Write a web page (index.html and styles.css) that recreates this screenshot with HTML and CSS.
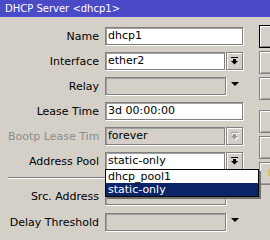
FILE: index.html
```html
<!DOCTYPE html>
<html>
<head>
    <title>DHCP Server</title>
    <link rel="stylesheet" href="styles.css">
</head>
<body>
    <div class="window">
        <div class="titlebar">DHCP Server &lt;dhcp1&gt;</div>
        <div class="content">
            <div class="form">
                <div class="row">
                    <label class="lbl">Name</label>
                    <div class="field wide">dhcp1</div>
                </div>
                <div class="row">
                    <label class="lbl">Interface</label>
                    <div class="field">ether2</div>
                    <span class="dd-btn">
                        <svg width="7" height="8" viewBox="0 0 7 8"><rect x="0" y="0" width="7" height="1"/><rect x="2" y="2" width="3" height="2"/><polygon points="0,4 7,4 3.5,7.5"/></svg>
                    </span>
                </div>
                <div class="row">
                    <label class="lbl">Relay</label>
                    <div class="field off plain"></div>
                    <span class="arrow"></span>
                </div>
                <div class="row">
                    <label class="lbl">Lease Time</label>
                    <div class="field wide">3d 00:00:00</div>
                </div>
                <div class="row">
                    <label class="lbl dim">Bootp Lease Time</label>
                    <div class="field off">forever</div>
                    <span class="dd-btn disabled">
                        <svg width="7" height="8" viewBox="0 0 7 8"><rect x="0" y="0" width="7" height="1"/><rect x="2" y="2" width="3" height="2"/><polygon points="0,4 7,4 3.5,7.5"/></svg>
                    </span>
                </div>
                <div class="row">
                    <label class="lbl">Address Pool</label>
                    <div class="field">static-only</div>
                    <span class="dd-btn">
                        <svg width="7" height="8" viewBox="0 0 7 8"><rect x="0" y="0" width="7" height="1"/><rect x="2" y="2" width="3" height="2"/><polygon points="0,4 7,4 3.5,7.5"/></svg>
                    </span>
                </div>
                <div class="sep"></div>
                <div class="row spaced">
                    <label class="lbl">Src. Address</label>
                    <div class="field off plain"></div>
                    <span class="arrow"></span>
                </div>
                <div class="row">
                    <label class="lbl">Delay Threshold</label>
                    <div class="field off plain"></div>
                    <span class="arrow"></span>
                </div>

                <!-- lista abierta de Address Pool -->
                <ul class="popup">
                    <li>dhcp_pool1</li>
                    <li class="sel">static-only</li>
                </ul>
            </div>
            <div class="buttons">
                <span class="btn default"></span>
                <span class="btn"></span>
                <span class="btn"></span>
                <span class="btn group"></span>
                <span class="btn"></span>
                <span class="btn"><span class="mark"></span></span>
            </div>
        </div>
    </div>
</body>
</html>
```

FILE: styles.css
```css
/* Ventana */
body {
    margin: 0;
    background-color: #d4d0c8;
    font-family: "DejaVu Sans", sans-serif;
    font-size: 11px;
    color: #000;
    overflow: hidden;
}

.window {
    width: 270px;
    height: 240px;
    overflow: hidden;
}

.titlebar {
    height: 17px;
    line-height: 17px;
    padding-left: 5px;
    background-color: #4a4ac6;
    color: #fff;
    font-size: 10px;
}

.content {
    display: flex;
    padding-top: 8px;
}

/* Formulario */
.form {
    position: relative;
    flex-shrink: 0;
    width: 251px;
    padding: 2px 0 0 8px;
}

.row {
    display: flex;
    align-items: center;
    height: 18px;
    margin-bottom: 7px;
}

.row.spaced {
    margin-bottom: 8px;
}

.lbl {
    width: 91px;
    margin-right: 6px;
    overflow: hidden;
    white-space: nowrap;
    text-align: right;
}

.lbl.dim {
    color: #8c8c8c;
}

.field {
    box-sizing: border-box;
    width: 120px;
    height: 18px;
    line-height: 16px;
    padding-left: 2px;
    background-color: #fff;
    border: 1px solid #808080;
    box-shadow: inset 1px 1px 0 #a0a0a0, 1px 1px 0 #fff;
    white-space: nowrap;
    overflow: hidden;
}

.field.wide {
    width: 138px;
}

.field.plain {
    width: 121px;
}

.field.off {
    background-color: #d4d0c8;
}

.dd-btn {
    box-sizing: border-box;
    display: flex;
    align-items: center;
    justify-content: center;
    width: 17px;
    height: 18px;
    margin-left: 1px;
    border: 1px solid #808080;
    box-shadow: inset 1px 1px 0 #fff, 1px 1px 0 #fff;
}

.dd-btn svg {
    fill: #000;
}

.dd-btn.disabled svg {
    fill: #9a9a9a;
    filter: drop-shadow(1px 1px 0 #fff);
}

.arrow {
    align-self: flex-start;
    margin: 5px 0 0 5px;
    width: 0;
    height: 0;
    border-left: 4px solid transparent;
    border-right: 4px solid transparent;
    border-top: 4px solid #000;
}

.sep {
    height: 0;
    margin: 1px 0 8px;
    border-top: 1px solid #808080;
    border-bottom: 1px solid #fff;
}

/* Lista desplegable */
.popup {
    position: absolute;
    left: 105px;
    top: 144px;
    width: 152px;
    margin: 0;
    padding: 0;
    list-style: none;
    background-color: #fff;
    border: 1px solid #000;
    box-shadow: 2px 2px 0 #6e6e6e;
    z-index: 2;
}

.popup li {
    height: 13px;
    line-height: 13px;
    padding-left: 2px;
}

.popup li.sel {
    background-color: #0a246a;
    color: #fff;
}

/* Botones de la derecha */
.buttons {
    display: flex;
    flex-direction: column;
    flex-shrink: 0;
}

.btn {
    position: relative;
    box-sizing: border-box;
    width: 30px;
    height: 23px;
    margin-bottom: 3px;
    border: 1px solid #808080;
    box-shadow: inset 1px 1px 0 #fff, inset -1px -1px 0 #a0a0a0;
}

.btn.default {
    border: 1px solid #000;
    box-shadow: inset 1px 1px 0 #fff, inset -1px -1px 0 #808080;
}

.btn.group {
    margin-top: 7px;
}

.btn .mark {
    position: absolute;
    left: 8px;
    top: 6px;
    width: 3px;
    height: 7px;
    background-color: #e0c070;
}
```
